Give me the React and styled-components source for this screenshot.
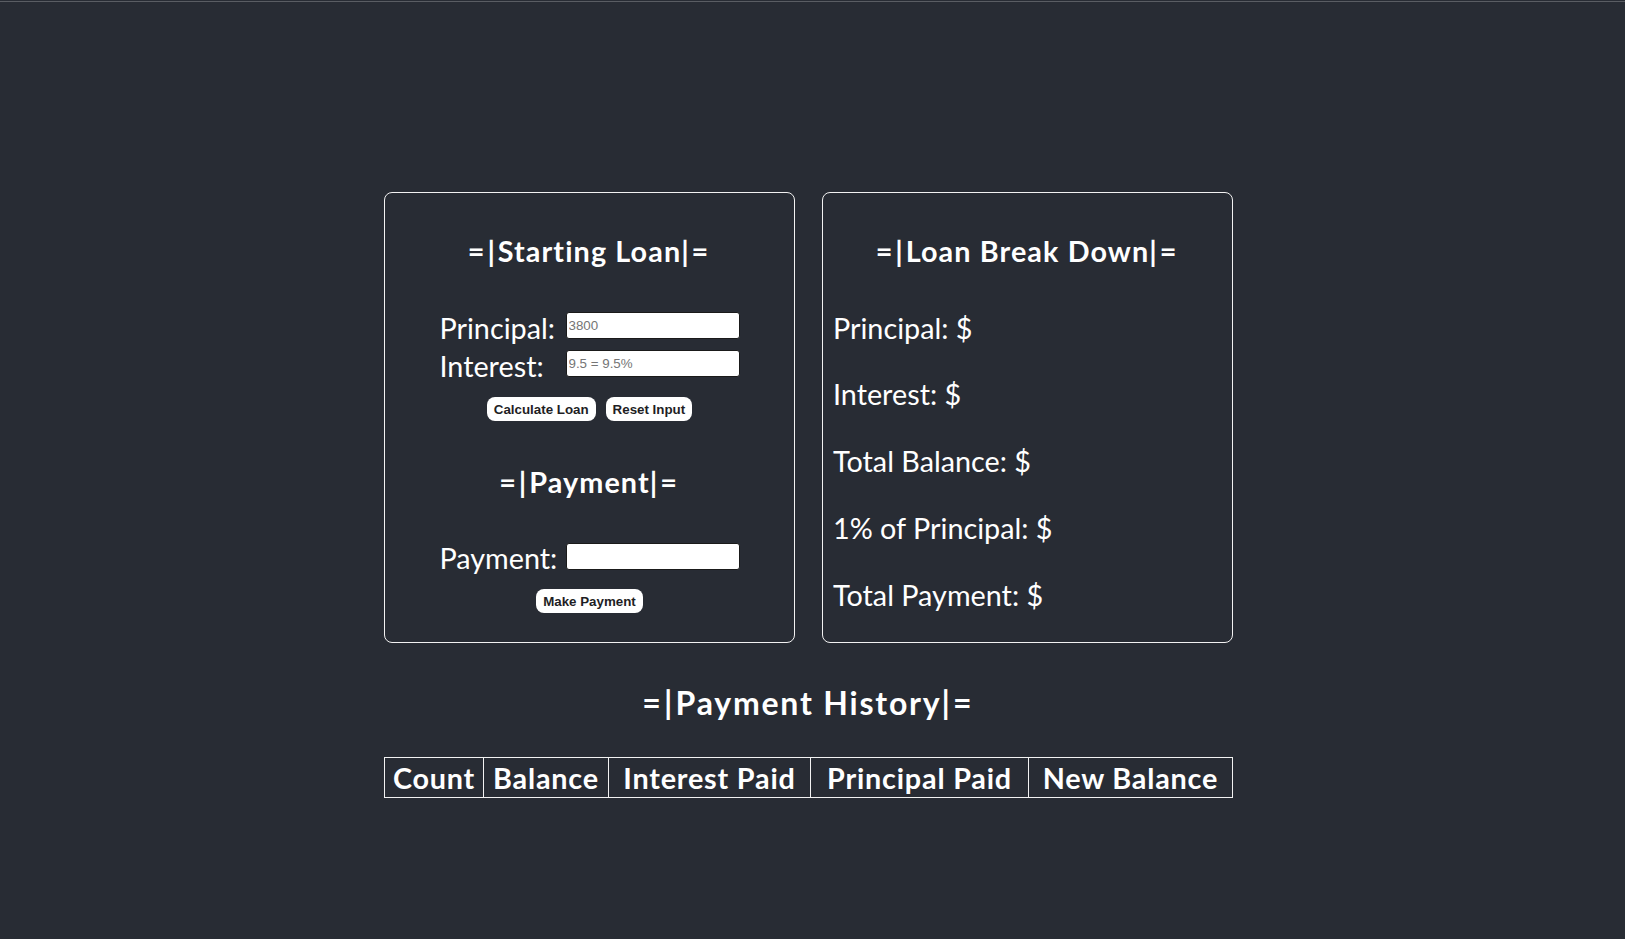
import React from "react";
import styled, { createGlobalStyle } from "styled-components";

const FONT = `"Lato", "Open Sans", "Noto Sans", sans-serif`;
const BASE = "28.78px";

const GlobalStyle = createGlobalStyle`
  html, body {
    margin: 0;
    padding: 0;
    background: #282c34;
    color: #ffffff;
    font-family: ${FONT};
  }
`;

const TopLine = styled.div`
  height: 1px;
  margin-top: 1px;
  background: #5a5d63;
`;

const Page = styled.div`
  min-height: 937px;
  padding-top: 190px;
  box-sizing: border-box;
  font-size: ${BASE};
  line-height: 38px;
`;

const Main = styled.main`
  width: 849px;
  margin-left: calc(50% - 428.5px);
`;

const CardRow = styled.div`
  display: grid;
  grid-template-columns: 411px 411px;
  column-gap: 27px;
`;

const Card = styled.section`
  border: 1px solid #f2f2f2;
  border-radius: 8px;
  padding: 0 10px;
`;

const Title = styled.h4`
  margin: ${(p) => p.$top || "39px"} 0 ${(p) => p.$bottom || "38.5px"};
  font-size: ${BASE};
  font-weight: 700;
  line-height: 38px;
  letter-spacing: 1.1px;
  text-align: center;
`;

const Deco = styled.span`
  letter-spacing: 0.1em;
`;

const FormGrid = styled.div`
  display: grid;
  grid-template-columns: 126px 174px;
  grid-auto-rows: 38px;
  justify-content: center;
`;

const Label = styled.label`
  white-space: nowrap;
`;

const Input = styled.input`
  box-sizing: border-box;
  width: 174px;
  height: 27px;
  margin-top: ${(p) => p.$mt || "3.5px"};
  padding: 1px 2px;
  border: 1px solid #1a1a1a;
  border-radius: 3px;
  background: #ffffff;
  font-family: "Liberation Sans", Arial, sans-serif;
  font-size: 13.33px;
  color: #222;
  &::placeholder {
    color: #757575;
  }
`;

const ButtonRow = styled.div`
  display: flex;
  justify-content: center;
  gap: 10px;
  margin-top: 12.5px;
`;

const Button = styled.button`
  height: 24px;
  padding: 0 7px;
  border: none;
  border-radius: 8px;
  background: #ffffff;
  color: #1e1e24;
  font-family: "Liberation Sans", Arial, sans-serif;
  font-size: 13.33px;
  font-weight: 700;
  cursor: pointer;
`;

const Line = styled.p`
  margin: ${BASE} 0;
  line-height: 38px;
`;

const SectionTitle = styled.h3`
  margin: 38.7px 0 33.3px;
  font-size: 32px;
  font-weight: 700;
  line-height: 42px;
  letter-spacing: 1.8px;
  text-align: center;
`;

const Table = styled.table`
  width: 849px;
  table-layout: fixed;
  border-collapse: collapse;
  border: 1px solid #f2f2f2;
`;

const Th = styled.th`
  width: ${(p) => p.$w}px;
  height: 39px;
  padding: 0;
  border: 1px solid #f2f2f2;
  font-size: ${BASE};
  font-weight: 700;
  line-height: 38px;
  letter-spacing: 0.8px;
  text-align: center;
  white-space: nowrap;
`;

const columns = [
  ["Count", 98],
  ["Balance", 124],
  ["Interest Paid", 201],
  ["Principal Paid", 217],
  ["New Balance", 203],
];

const breakdown = [
  "Principal: $",
  "Interest: $",
  "Total Balance: $",
  "1% of Principal: $",
  "Total Payment: $",
];

const Decorated = ({ children }) => (
  <>
    <Deco>=|</Deco>
    {children}
    <Deco>|=</Deco>
  </>
);

export default function App() {
  return (
    <>
      <GlobalStyle />
      <TopLine />
      <Page>
        <Main>
          <CardRow>
            <Card>
              <Title>
                <Decorated>Starting Loan</Decorated>
              </Title>
              <FormGrid>
                <Label>Principal:</Label>
                <Input placeholder="3800" />
                <Label>Interest:</Label>
                <Input placeholder="9.5 = 9.5%" />
              </FormGrid>
              <ButtonRow>
                <Button>Calculate Loan</Button>
                <Button>Reset Input</Button>
              </ButtonRow>
              <Title $top="42px" $bottom="37.5px">
                <Decorated>Payment</Decorated>
              </Title>
              <FormGrid>
                <Label>Payment:</Label>
                <Input $mt="4.5px" />
              </FormGrid>
              <ButtonRow>
                <Button>Make Payment</Button>
              </ButtonRow>
            </Card>
            <Card>
              <Title>
                <Decorated>Loan Break Down</Decorated>
              </Title>
              {breakdown.map((t) => (
                <Line key={t}>{t}</Line>
              ))}
            </Card>
          </CardRow>
          <SectionTitle>
            <Decorated>Payment History</Decorated>
          </SectionTitle>
          <Table>
            <thead>
              <tr>
                {columns.map(([t, w]) => (
                  <Th key={t} $w={w}>
                    {t}
                  </Th>
                ))}
              </tr>
            </thead>
          </Table>
        </Main>
      </Page>
    </>
  );
}
